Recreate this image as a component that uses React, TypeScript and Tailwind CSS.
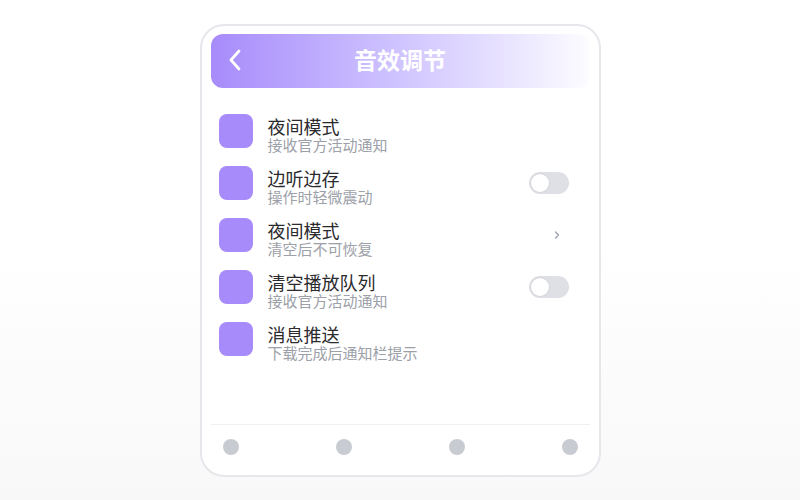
const ROWS = [
  { title: "夜间模式", sub: "接收官方活动通知", action: "none" },
  { title: "边听边存", sub: "操作时轻微震动", action: "toggle" },
  { title: "夜间模式", sub: "清空后不可恢复", action: "chevron" },
  { title: "清空播放队列", sub: "接收官方活动通知", action: "toggle" },
  { title: "消息推送", sub: "下载完成后通知栏提示", action: "none" },
];

function Toggle() {
  return (
    <div className="relative w-10 h-[22px] rounded-full bg-[#dfe0e5]">
      <div className="absolute left-[2px] top-[2px] w-[18px] h-[18px] rounded-full bg-white shadow-[0_0_0_1px_#d4d6dc]" />
    </div>
  );
}

function Chevron() {
  return (
    <svg width="6" height="10" viewBox="0 0 6 10" fill="none" className="mr-[9px]">
      <path d="M1.5 2l3 3-3 3" stroke="#9ca3af" strokeWidth="1.4" strokeLinecap="round" strokeLinejoin="round" />
    </svg>
  );
}

export default function App() {
  return (
    <div
      className="h-[500px] w-[800px] bg-gradient-to-b from-white from-50% to-[#f8f8f9] pt-6"
      style={{ fontFamily: '"Noto Sans CJK SC", "Noto Sans", sans-serif' }}
    >
      <div className="mx-auto flex h-[453px] w-[401px] flex-col rounded-[24px] border-2 border-[#e6e7eb] bg-white px-[9px] pt-2 pb-5">
        <div className="relative flex h-[54px] items-center justify-center rounded-xl bg-gradient-to-r from-[#a78bfa] to-[#fdfcff] pb-[3px]">
          <svg width="16" height="24" viewBox="0 0 16 24" fill="none" className="absolute left-[16px] top-[14px]">
            <path d="M12 3L4 12l8 9" stroke="white" strokeWidth="2.8" strokeLinecap="round" strokeLinejoin="round" />
          </svg>
          <h1 className="text-[23px] font-bold text-white">音效调节</h1>
        </div>

        <div className="mt-[26px] flex flex-col">
          {ROWS.map((row, i) => (
            <div key={i} className="flex h-[52px] items-start pl-2 pr-[21px]">
              <div className="h-[34px] w-[34px] shrink-0 rounded-lg bg-[#a78bfa]" />
              <div className="ml-[15px] flex-1 pt-[2px]">
                <div className="text-[18px] leading-[20px] text-[#2b2b2e]">{row.title}</div>
                <div className="text-[15px] leading-[18px] text-[#9ca0a8]">{row.sub}</div>
              </div>
              <div className="flex h-[34px] items-center">
                {row.action === "toggle" && <Toggle />}
                {row.action === "chevron" && <Chevron />}
              </div>
            </div>
          ))}
        </div>

        <div className="flex-1" />
        <div className="h-px bg-[#eeeff2]" />
        <div className="mt-[14px] flex justify-between px-3">
          {Array.from({ length: 4 }).map((_, i) => (
            <div key={i} className="h-4 w-4 rounded-full bg-[#c8ccd2]" />
          ))}
        </div>
      </div>
    </div>
  );
}
